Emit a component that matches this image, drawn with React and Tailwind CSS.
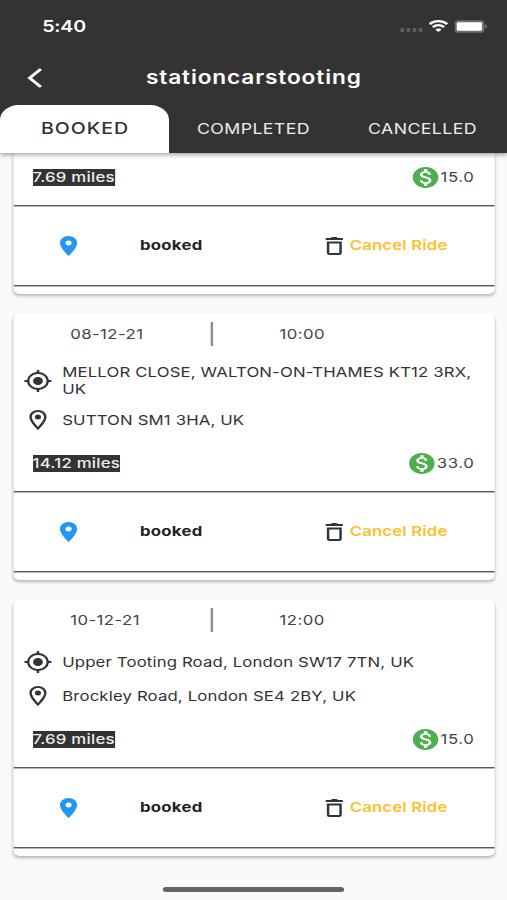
import React, { useState } from 'react';
import {
  MdGpsFixed,
  MdLocationOn,
  MdMonetizationOn,
  MdOutlineLocationOn,
} from 'react-icons/md';

const rides = [
  { id: 1, miles: '7.69 miles', price: '15.0' },
  {
    id: 2,
    date: '08-12-21',
    time: '10:00',
    from: 'MELLOR CLOSE, WALTON-ON-THAMES KT12 3RX, UK',
    to: 'SUTTON SM1 3HA, UK',
    miles: '14.12 miles',
    price: '33.0',
  },
  {
    id: 3,
    date: '10-12-21',
    time: '12:00',
    from: 'Upper Tooting Road, London SW17 7TN, UK',
    to: 'Brockley Road, London SE4 2BY, UK',
    miles: '7.69 miles',
    price: '15.0',
  },
];

const tabs = ['BOOKED', 'COMPLETED', 'CANCELLED'];

function StatusBar() {
  return (
    <div className="flex h-[52px] items-center justify-between pl-[34.5px] pr-[16.5px] text-white">
      <span className="text-[16px] font-semibold tracking-[-0.2px]">5:40</span>
      <div className="flex items-center">
        <div className="mr-[5px] mt-[8px] flex gap-[2px]">
          <span className="h-[3.5px] w-[3px] rounded-[1px] bg-[#606060]" />
          <span className="h-[3.5px] w-[3px] rounded-[1px] bg-[#606060]" />
          <span className="h-[3.5px] w-[3px] rounded-[1px] bg-[#606060]" />
          <span className="h-[3.5px] w-[3px] rounded-[1px] bg-[#606060]" />
        </div>
        <svg className="mr-[5px] h-[12px] w-[16px]" viewBox="0 0 16 12" fill="none" stroke="white" strokeWidth="2.3">
          <path d="M.8 4.2C5 .2 11 .2 15.2 4.2" />
          <path d="M3.4 7.2C6.2 4.6 9.8 4.6 12.6 7.2" />
          <path d="M8 12 5.4 9.4C6.9 8.1 9.1 8.1 10.6 9.4Z" fill="white" stroke="none" />
        </svg>
        <svg className="h-[13px] w-[27px]" viewBox="0 0 27 13">
          <rect x=".2" y=".2" width="24.4" height="12.6" rx="3.4" fill="#6f6f6f" />
          <rect x="2" y="2.2" width="20.6" height="8.6" rx="1.4" fill="white" />
          <path d="M25.2 4.3q1.5.8 1.5 2.2t-1.5 2.2Z" fill="#6f6f6f" />
        </svg>
      </div>
    </div>
  );
}

function Header({ active, onChange }) {
  return (
    <header className="relative z-10 h-[153px] shrink-0 bg-[#333333] shadow-[0_2px_4px_rgba(0,0,0,0.35)]">
      <StatusBar />
      <div className="flex h-[53px] items-center px-[22px] pb-[2px]">
        <svg className="h-[20px] w-[14px]" viewBox="0 0 14 20" fill="none" stroke="white" strokeWidth="2.6" strokeLinecap="round">
          <path d="M10.6 1.8 2.2 10l8.4 8.2" />
        </svg>
        <h1 className="flex-1 pr-[13.5px] text-center text-[18.5px] font-semibold tracking-[0.7px] text-white">
          stationcarstooting
        </h1>
      </div>
      <div className="grid grid-cols-3">
        {tabs.map((tab) => (
          <button
            key={tab}
            onClick={() => onChange(tab)}
            className={
              tab === active
                ? 'h-[48px] rounded-t-[15px] bg-white pl-[1px] pb-[2px] text-[16px] font-medium tracking-[0.8px] text-[#333333]'
                : 'h-[48px] text-[14.5px] font-normal tracking-[0.3px] text-[#ececec]'
            }
          >
            {tab}
          </button>
        ))}
      </div>
    </header>
  );
}

function Line() {
  return <div className="h-px bg-[#5a5a5a] shadow-[0_1px_0_#b5b5b5]" />;
}

function TrashIcon({ className }) {
  return (
    <svg className={className} viewBox="0 0 24 24" fill="none" stroke="currentColor">
      <path d="M6.9 8.6h10.2V19q0 1.1-1.1 1.1H8q-1.1 0-1.1-1.1Z" strokeWidth="2" />
      <path d="M5 5h14" strokeWidth="2.2" />
      <path d="M8.6 4.4q1-1.4 2.4-1.4h2q1.400 0 2.400 1.400Z" fill="currentColor" stroke="none" />
    </svg>
  );
}

function Address({ icon: Icon, text }) {
  return (
    <div className="flex items-center pl-[8px] pr-[12px] text-[#333333]">
      <Icon className="size-[24px] shrink-0" />
      <p className="pl-[8.3px] leading-[17px]">{text}</p>
    </div>
  );
}

function RideCard({ ride }) {
  return (
    <article className="overflow-hidden rounded-[5px] bg-white text-[13.7px] tracking-[0.11px] text-[#444444] shadow-[0_2px_3px_rgba(0,0,0,0.28)] first:-mt-[4px]">
      {ride.date && (
        <>
          <div className="flex h-[40px] items-center gap-[54.5px] pl-[46.8px] tracking-[0.35px]">
            <span className="min-w-[60px]">{ride.date}</span>
            <span className="h-[24px] w-[2px] bg-[#8f8f8f]" />
            <span>{ride.time}</span>
          </div>
          <div className="flex flex-col gap-[10px] pb-[3px] pt-[10px]">
            <Address icon={MdGpsFixed} text={ride.from} />
            <Address icon={MdOutlineLocationOn} text={ride.to} />
          </div>
        </>
      )}
      <div className="flex h-[56px] items-center justify-between pl-[16px] pr-[16px] tracking-[0.2px]">
        <span className="bg-[#333333] font-medium leading-[17px] text-[#eeeeee]">{ride.miles}</span>
        <span className="flex items-center">
          <MdMonetizationOn className="size-[25px] text-[#4caf50]" />
          <span className="tracking-[0.5px]">{ride.price}</span>
        </span>
      </div>
      <Line />
      <div className="flex h-[79px] items-center font-semibold">
        <MdLocationOn className="ml-[33px] size-[24px] text-[#2196f3]" />
        <span className="ml-[46.8px] w-[147px] font-bold tracking-[0.2px] text-[#222222]">{ride.status || 'booked'}</span>
        <button className="flex items-center text-[#fcc02e]">
          <TrashIcon className="mr-[0.3px] size-[24px] text-[#333333]" />
          Cancel Ride
        </button>
      </div>
      <Line />
      <div className="h-[8px]" />
    </article>
  );
}

export default function App() {
  const [active, setActive] = useState('BOOKED');

  return (
    <div className="h-[900px] w-[507px] overflow-hidden bg-[#fafafa]">
      <div className="flex h-[900px] w-[414px] origin-top-left scale-x-[1.2246] flex-col overflow-hidden bg-[#fafafa] font-[Inter,'Liberation_Sans',sans-serif]">
        <Header active={active} onChange={setActive} />
        <main className="flex flex-1 flex-col gap-[20px] px-[10.5px]">
          {rides.map((ride) => (
            <RideCard key={ride.id} ride={ride} />
          ))}
        </main>
        <div className="mx-auto mb-[8px] h-[5px] w-[148px] shrink-0 rounded-full bg-[#666666]" />
      </div>
    </div>
  );
}
